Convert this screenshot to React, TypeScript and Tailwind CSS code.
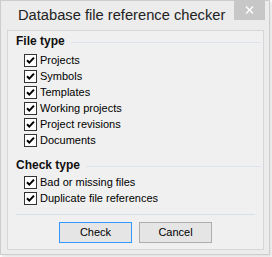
const fileTypes = [
  "Projects",
  "Symbols",
  "Templates",
  "Working projects",
  "Project revisions",
  "Documents",
]

const checkTypes = ["Bad or missing files", "Duplicate file references"]

function CheckRow({ label }: { label: string }) {
  return (
    <label className="flex h-[16px] items-center pl-[16px]">
      <span className="flex h-[13px] w-[13px] items-center justify-center border border-[#333333] bg-white">
        <svg width="11" height="11" viewBox="0 0 11 11">
          <path d="M2 5.2 L4.3 7.6 L9 2.6" fill="none" stroke="#000" strokeWidth="2" />
        </svg>
      </span>
      <span className="ml-[3px] text-[11px] leading-[14px] text-black">{label}</span>
    </label>
  )
}

function GroupHeading({ title }: { title: string }) {
  return (
    <div className="flex items-center pl-[8px] pr-[2px]">
      <span className="text-[12px] font-bold leading-[14px] text-[#111]">{title}</span>
      <span className="ml-[6px] mt-[2px] h-px flex-1 bg-[#dbe3ec]" />
    </div>
  )
}

export default function App() {
  return (
    <div
      className="h-[257px] w-[272px] bg-white"
      style={{ fontFamily: '"Liberation Sans", Arial, sans-serif' }}
    >
      <div className="flex h-[255px] w-[270px] flex-col border border-[#cdcdcd] bg-[#ececec] shadow-[2px_2px_3px_rgba(0,0,0,0.12)]">
        {/* title bar */}
        <div className="flex h-[29px] items-start">
          <span className="pl-[17px] pt-[6px] text-[14.7px] leading-[17px] text-[#222]">
            Database file reference checker
          </span>
          <button className="ml-auto mr-[4px] -mt-px flex h-[20px] w-[31px] items-center justify-center bg-[#c7c7c7]">
            <svg width="9" height="8" viewBox="0 0 9 8">
              <path d="M1 0.5 L8 7.5 M8 0.5 L1 7.5" stroke="#fff" strokeWidth="1.4" />
            </svg>
          </button>
        </div>

        {/* client panel */}
        <div className="ml-[6px] mr-[5px] flex h-[220px] flex-col border border-[#d6d6d6] bg-[#f0f0f0] pt-[3px]">
          <GroupHeading title="File type" />
          <div className="mt-[4px] flex flex-col">
            {fileTypes.map((t) => (
              <CheckRow key={t} label={t} />
            ))}
          </div>

          <div className="mt-[10px]">
            <GroupHeading title="Check type" />
          </div>
          <div className="mt-[2px] flex flex-col">
            {checkTypes.map((t) => (
              <CheckRow key={t} label={t} />
            ))}
          </div>

          <div className="mx-[8px] mt-[8px] h-px bg-[#d5dfe7]" />

          <div className="mt-[7px] flex justify-center gap-[7px]">
            <button className="h-[21px] w-[73px] border border-[#3399ff] bg-[#e5e5e5] text-[11px] text-black">
              Check
            </button>
            <button className="h-[21px] w-[73px] border border-[#adadad] bg-[#e5e5e5] text-[11px] text-black">
              Cancel
            </button>
          </div>
        </div>
      </div>
    </div>
  )
}
